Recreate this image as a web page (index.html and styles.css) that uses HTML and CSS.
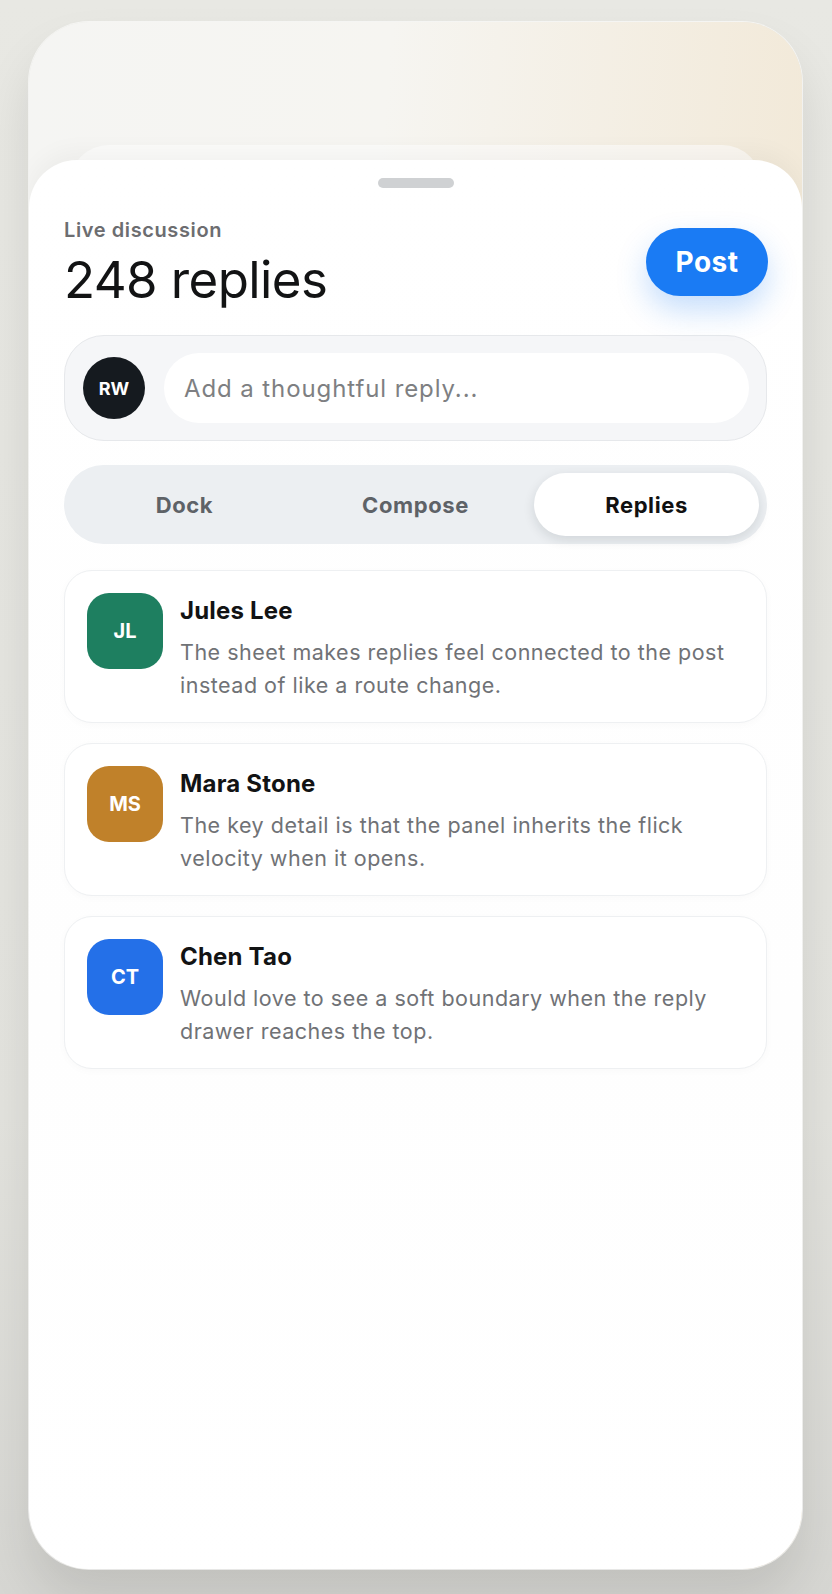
FILE: index.html
```html
<!DOCTYPE html>
<html lang="en">
<head>
    <meta charset="UTF-8">
    <meta name="viewport" content="width=device-width, initial-scale=1.0">
    <title>Live discussion</title>
    <link rel="stylesheet" href="styles.css">
</head>
<body>
    <div class="phone">
        <div class="peek"></div>
        <div class="sheet">
            <div class="handle"></div>
            <div class="header">
                <div class="title">
                    <div class="eyebrow">Live discussion</div>
                    <h1 class="count">248 replies</h1>
                </div>
                <button class="post-button">Post</button>
            </div>

            <div class="composer">
                <div class="avatar-round">RW</div>
                <input type="text" class="reply-input" placeholder="Add a thoughtful reply...">
            </div>

            <div class="segmented">
                <button class="segment">Dock</button>
                <button class="segment">Compose</button>
                <button class="segment active">Replies</button>
            </div>

            <div class="replies">
                <div class="reply">
                    <div class="avatar green">JL</div>
                    <div class="reply-body">
                        <div class="reply-name">Jules Lee</div>
                        <p class="reply-text">The sheet makes replies feel connected to the post instead of like a route change.</p>
                    </div>
                </div>
                <div class="reply">
                    <div class="avatar amber">MS</div>
                    <div class="reply-body">
                        <div class="reply-name">Mara Stone</div>
                        <p class="reply-text">The key detail is that the panel inherits the flick velocity when it opens.</p>
                    </div>
                </div>
                <div class="reply">
                    <div class="avatar blue">CT</div>
                    <div class="reply-body">
                        <div class="reply-name">Chen Tao</div>
                        <p class="reply-text">Would love to see a soft boundary when the reply drawer reaches the top.</p>
                    </div>
                </div>
            </div>
        </div>
    </div>
</body>
</html>
```

FILE: styles.css
```css
body {
    margin: 0;
    font-family: Inter, "Noto Sans", sans-serif;
    background: linear-gradient(180deg, #e8e8e3 0%, #e3e3de 70%, #d6d6d2 100%);
    min-height: 1594px;
}
.phone {
    margin: 22px 0 0 29px;
    width: 773px;
    height: 1547px;
    border-radius: 60px;
    overflow: hidden;
    background: linear-gradient(95deg, #f5f5f3 0%, #f6f5f1 40%, #f1e6d2 100%);
    box-shadow: 0 0 0 1px rgba(255, 255, 255, 0.6), 0 30px 50px rgba(0, 0, 0, 0.1);
    padding-top: 123px;
    box-sizing: border-box;
}
.peek {
    margin: 0 40px;
    height: 40px;
    border-radius: 40px 40px 0 0;
    background: rgba(255, 255, 255, 0.55);
}
.sheet {
    margin-top: -25px;
    height: 1410px;
    background: linear-gradient(180deg, #ffffff 0%, #fefefe 60%, #ffffff 100%);
    border-radius: 48px 48px 0 0;
    padding: 18px 35px 0;
    box-shadow: 0 -8px 24px rgba(0, 0, 0, 0.04);
}
.handle {
    width: 76px;
    height: 10px;
    border-radius: 5px;
    background: #cfd1d3;
    margin: 0 auto;
}
.header {
    display: flex;
    justify-content: space-between;
    align-items: center;
    margin-top: 27px;
}
.title {
    padding-top: 2px;
}
.eyebrow {
    font-size: 20px;
    line-height: 26px;
    font-weight: 600;
    letter-spacing: 0.6px;
    color: #6c6d70;
}
.count {
    margin: 9px 0 0;
    font-size: 51px;
    line-height: 56px;
    font-weight: 400;
    color: #121314;
    letter-spacing: -0.6px;
}
.post-button {
    width: 122px;
    height: 68px;
    border: none;
    border-radius: 34px;
    background: #1a7bf4;
    color: white;
    font-family: inherit;
    font-size: 28px;
    font-weight: 700;
    letter-spacing: 0.5px;
    box-shadow: 0 14px 30px rgba(26, 123, 244, 0.25);
    margin-right: -1px;
}
.composer {
    margin-top: 27px;
    display: flex;
    align-items: center;
    gap: 19px;
    padding: 17px 17px 17px 18px;
    border: 1px solid #e6e8eb;
    border-radius: 40px;
    background: #f5f6f8;
}
.avatar-round {
    width: 62px;
    height: 62px;
    flex-shrink: 0;
    border-radius: 50%;
    background: #151a1f;
    color: white;
    font-size: 18px;
    font-weight: 700;
    display: flex;
    align-items: center;
    justify-content: center;
}
.reply-input {
    flex: 1;
    height: 70px;
    border: none;
    border-radius: 35px;
    background: white;
    padding: 0 20px;
    font-family: inherit;
    font-size: 24px;
    letter-spacing: 0.9px;
    color: #222;
    outline: none;
}
.reply-input::placeholder {
    color: #7e7f82;
}
.segmented {
    margin-top: 24px;
    display: grid;
    grid-template-columns: repeat(3, 1fr);
    gap: 6px;
    padding: 8px;
    border-radius: 40px;
    background: #eceff2;
}
.segment {
    height: 63px;
    border: none;
    border-radius: 32px;
    background: transparent;
    font-family: inherit;
    font-size: 22px;
    font-weight: 700;
    letter-spacing: 0.6px;
    color: #5e6267;
}
.segment.active {
    background: white;
    color: #111;
    box-shadow: 0 4px 12px rgba(20, 30, 40, 0.12);
}
.replies {
    margin-top: 26px;
    display: flex;
    flex-direction: column;
    gap: 20px;
}
.reply {
    display: flex;
    gap: 17px;
    padding: 22px 22px 20px;
    border: 1px solid #eef0f2;
    border-radius: 28px;
    background: white;
    box-shadow: 0 2px 8px rgba(0, 0, 0, 0.025);
}
.avatar {
    width: 76px;
    height: 76px;
    flex-shrink: 0;
    border-radius: 22px;
    color: white;
    font-size: 20px;
    font-weight: 700;
    display: flex;
    align-items: center;
    justify-content: center;
}
.avatar.green {
    background: #1e7f60;
}
.avatar.amber {
    background: #c0812a;
}
.avatar.blue {
    background: #2470e8;
}
.reply-name {
    margin-top: 3px;
    font-size: 24px;
    line-height: 30px;
    font-weight: 700;
    letter-spacing: 0.2px;
    color: #121314;
}
.reply-text {
    margin: 10px 0 0;
    font-size: 21.5px;
    line-height: 33px;
    letter-spacing: 0.5px;
    color: #707276;
}
```
